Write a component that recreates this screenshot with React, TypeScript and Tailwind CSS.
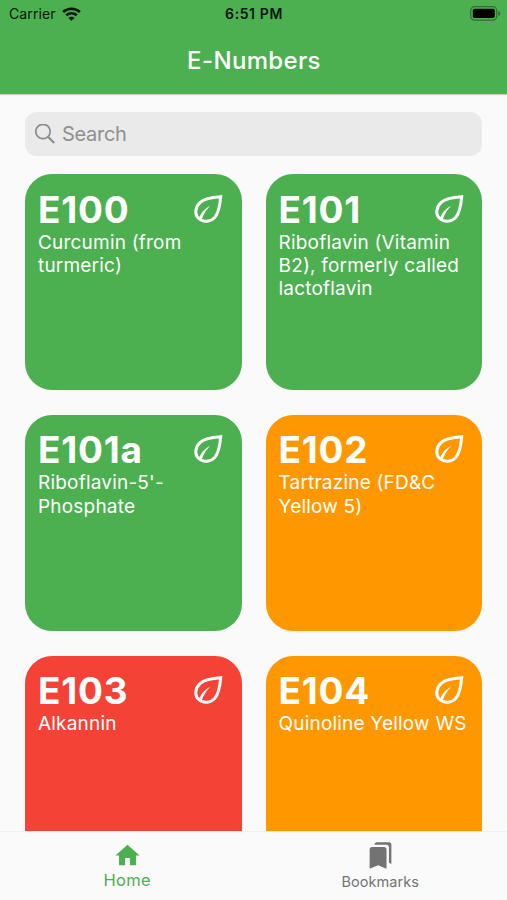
import React from "react";
import { MdBookmarks, MdHome } from "react-icons/md";

type Additive = { code: string; lines: string[]; color: string };

const additives: Additive[] = [
  { code: "E100", lines: ["Curcumin (from", "turmeric)"], color: "bg-[#4caf50]" },
  { code: "E101", lines: ["Riboflavin (Vitamin", "B2), formerly called", "lactoflavin"], color: "bg-[#4caf50]" },
  { code: "E101a", lines: ["Riboflavin-5'-", "Phosphate"], color: "bg-[#4caf50]" },
  { code: "E102", lines: ["Tartrazine (FD&C", "Yellow 5)"], color: "bg-[#ff9800]" },
  { code: "E103", lines: ["Alkannin"], color: "bg-[#f44336]" },
  { code: "E104", lines: ["Quinoline Yellow WS"], color: "bg-[#ff9800]" },
];

function WifiIcon() {
  return (
    <svg width="19" height="14" viewBox="0 0 19 14" fill="none" stroke="#06170a" strokeWidth="2.6">
      <path d="M1.1 5C5.800.600 13.200.600 17.900 5" />
      <path d="M4.200 8.300c3-2.800 7.600-2.800 10.600 0" />
      <path d="M9.500 13.800 6.400 10.900c1.700-1.500 4.500-1.500 6.200 0z" fill="#06170a" stroke="none" />
    </svg>
  );
}

function BatteryIcon() {
  return (
    <svg width="31" height="15" viewBox="0 0 31 15">
      <rect x="0.7" y="0.7" width="26" height="13.4" rx="3.800" fill="none" stroke="#2f7035" strokeWidth="1.2" />
      <rect x="2.8" y="2.8" width="22" height="9.2" rx="1.8" fill="#000" />
      <path d="M28.2 5v5c1.300-.4 2-1.400 2-2.500S29.500 5.400 28.200 5z" fill="#2f7035" />
    </svg>
  );
}

function SearchIcon() {
  return (
    <svg width="20" height="21" viewBox="0 0 20 21" fill="none" stroke="#8b8b8b" strokeWidth="1.7">
      <circle cx="8" cy="7.5" r="7.2" />
      <path d="m13 12.700 6.200 6.200" strokeWidth="2.1" />
    </svg>
  );
}

function LeafIcon() {
  return (
    <svg width="29" height="29" viewBox="0 0 29 29" fill="none">
      <path
        d="M26.700 1.700C17 2.300 10.500 3.500 6.200 7.400C.8 12.400.5 19.400 4.500 23.300C9 27.500 16.700 27.200 20.800 22.400C25 17.400 26 10.300 26.700 1.700Z"
        stroke="currentColor"
        strokeWidth="3"
      />
      <path d="M4.800 24.200C6.500 18.700 10 13.900 16.300 10.800C12.300 14.700 9.300 19.500 7.500 25Z" fill="currentColor" />
    </svg>
  );
}

function Card({ code, lines, color }: Additive) {
  return (
    <article className={`h-[216px] rounded-[27px] pl-[13px] pr-[18.500px] pt-[13.500px] text-white ${color}`}>
      <div className="flex h-[43px] items-center justify-between">
        <h2 className="text-[37px] leading-[43px] font-bold tracking-[0.800px]">{code}</h2>
        <LeafIcon />
      </div>
      <p className="text-[19px] leading-[23.200px] tracking-[0.200px] whitespace-nowrap">
        {lines.map((line) => (
          <span key={line} className="block">{line}</span>
        ))}
      </p>
    </article>
  );
}

export default function App() {
  return (
    <div className="flex h-[900px] w-[507px] flex-col overflow-hidden bg-[#fafafa] font-[Inter,sans-serif]">
      <header className="z-10 h-[94px] shrink-0 bg-[#4caf50] shadow-[0_1px_1px_#00000030]">
        <div className="grid h-[27px] grid-cols-3 items-center pr-[6px] pl-[9px] text-[14px] text-[#06170a]">
          <div className="flex items-center gap-[6px]">
            <span className="tracking-[0.100px]">Carrier</span>
            <WifiIcon />
          </div>
          <span className="pr-[2px] text-center font-semibold tracking-[0.600px]">6:51 PM</span>
          <div className="flex justify-end"><BatteryIcon /></div>
        </div>
        <h1 className="pt-[18px] pl-px text-center text-[24px] leading-[31px] font-medium tracking-[0.350px] text-white">E-Numbers</h1>
      </header>

      <main className="min-h-0 flex-1 overflow-hidden px-[25px] pt-[18px]">
        <div className="flex h-11 items-center gap-[7px] rounded-[12px] bg-[#eaeaea] pl-[10px] text-[#8f8f8f]">
          <SearchIcon />
          <span className="text-[20px] tracking-[-0.300px]">Search</span>
        </div>
        <div className="mt-[18.400px] grid grid-cols-2 gap-x-[24px] gap-y-[24.600px]">
          {additives.map((item) => (
            <Card key={item.code} {...item} />
          ))}
        </div>
      </main>

      <nav className="z-10 grid h-[69px] shrink-0 grid-cols-2 border-t border-[#f0f0f0] bg-[#fafafa]">
        <div className="flex flex-col items-center pt-[9px] pl-px text-[#4caf50]">
          <MdHome size={29} />
          <span className="text-[16.500px] leading-[21px] tracking-[0.300px]">Home</span>
        </div>
        <div className="flex flex-col items-center pt-[9px] text-[#737373]">
          <MdBookmarks size={29} />
          <span className="text-[14.500px] leading-[23px] tracking-[0.050px]">Bookmarks</span>
        </div>
      </nav>
    </div>
  );
}
